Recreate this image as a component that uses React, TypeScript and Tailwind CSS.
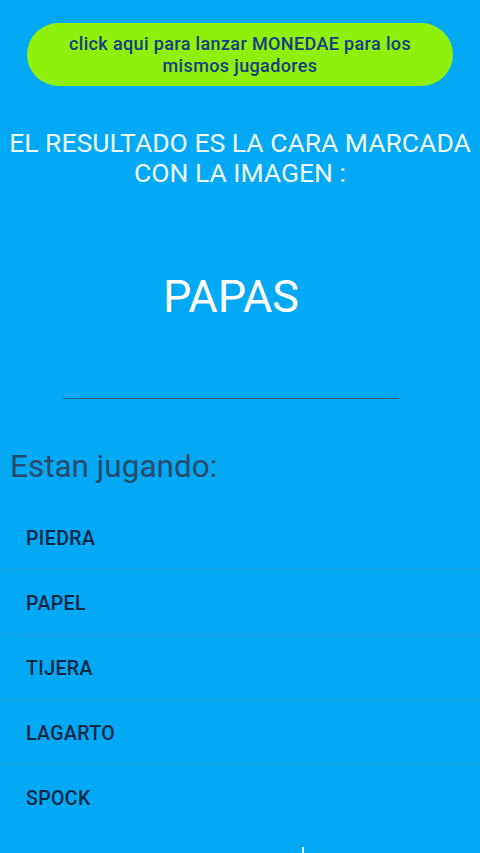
const players = ["PIEDRA", "PAPEL", "TIJERA", "LAGARTO", "SPOCK"];

export default function App() {
  return (
    <div
      className="w-[480px] h-[853px] bg-[#03a9f4] overflow-hidden relative flex flex-col"
      style={{ fontFamily: "Roboto, 'Noto Sans', sans-serif" }}
    >
      <button className="mx-[27px] mt-[23px] h-[63px] rounded-full bg-[#8ef00b] flex items-center justify-center text-center text-[18px] font-medium leading-[22px] tracking-[0.02em] text-[#173d86]">
        click aqui para lanzar MONEDAE para los
        <br />
        mismos jugadores
      </button>

      <p className="mt-[42px] text-center text-[26.5px] leading-[30px] text-[#eef8ff]">
        EL RESULTADO ES LA CARA MARCADA
        <br />
        CON LA IMAGEN :
      </p>

      <p className="mt-[82px] pr-[18px] text-center text-[45px] leading-[54px] text-white">PAPAS</p>

      <div className="mt-[74px] ml-[63px] w-[336px] h-px bg-[#2b5f86]" />

      <h2 className="mt-[48px] ml-[10px] text-[31.5px] leading-[40px] text-[#2a4a6b]">Estan jugando:</h2>

      <ul className="mt-[18px] ml-[4px]">
        {players.map((p, i) => (
          <li
            key={p}
            className={
              "h-[65px] flex items-center pl-[22px] pt-[3px] text-[19.5px] font-medium tracking-[0.02em] text-[#0c2644] " +
              (i < players.length - 1 ? "border-b border-[#1a98dc]" : "")
            }
          >
            {p}
          </li>
        ))}
      </ul>

      <div className="absolute left-[302px] bottom-0 w-[2px] h-[6px] bg-[#cfefff]" />
    </div>
  );
}
